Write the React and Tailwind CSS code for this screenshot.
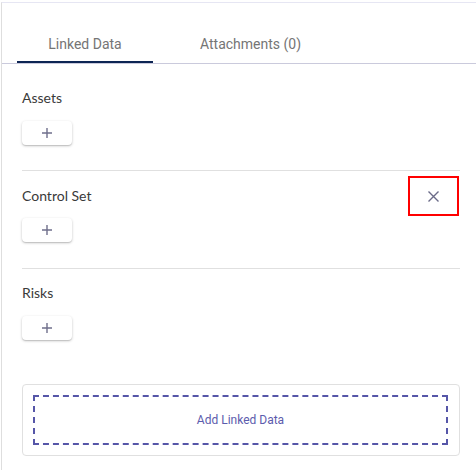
import { useState } from 'react'

function AddButton() {
  return (
    <button
      type="button"
      className="flex h-[24px] w-[50px] items-center justify-center rounded-[4px] bg-white shadow-[0_1px_3px_rgba(0,0,0,0.2),0_1px_1px_rgba(0,0,0,0.12)]"
    >
      <svg width="10" height="10" viewBox="0 0 10 10" className="text-[#6f6f8c]">
        <path d="M5 0v10M0 5h10" stroke="currentColor" strokeWidth="1.4" fill="none" />
      </svg>
    </button>
  )
}

function CloseButton() {
  return (
    <button
      type="button"
      className="-my-[10px] mr-[1px] flex h-[40px] w-[51px] items-center justify-center border-2 border-[#ff0000] bg-white"
    >
      <svg width="11" height="11" viewBox="0 0 11 11" className="text-[#6b6b88]">
        <path d="M0.5 0.5l10 10M10.5 0.5l-10 10" stroke="currentColor" strokeWidth="1.4" fill="none" />
      </svg>
    </button>
  )
}

const tabs = [
  { id: 'linked', label: 'Linked Data', width: 'w-[136px]' },
  { id: 'attachments', label: 'Attachments (0)', width: 'w-[195px]' },
]

export default function App() {
  const [activeTab, setActiveTab] = useState('linked')

  return (
    <div className="h-[470px] w-[476px] bg-white pl-[1px] pt-[2px]">
      <div className="h-full border-l border-t border-l-[#dedede] border-t-[#e6e6f3] font-['Roboto',sans-serif]">
        <div className="flex h-[61px] items-end border-b border-[#cacadc] pl-[15px]">
          {tabs.map((tab) => {
            const isActive = activeTab === tab.id
            return (
              <button
                key={tab.id}
                type="button"
                onClick={() => setActiveTab(tab.id)}
                className={[
                  'flex h-[36px] items-center justify-center border-b-2 text-[14px] text-[#757575]',
                  tab.width,
                  isActive ? 'border-[#0d2554]' : 'border-transparent',
                ].join(' ')}
              >
                {tab.label}
              </button>
            )
          })}
        </div>

        <div className="pl-[20px] pr-[16px] font-['Lato',sans-serif] text-[14px] leading-[20px] text-[#3a3a3a]">
          <section className="border-b border-[#e0e0e0] pb-[25px] pt-[24px]">
            <h3>Assets</h3>
            <div className="mt-[13px]">
              <AddButton />
            </div>
          </section>

          <section className="border-b border-[#e0e0e0] pb-[26px] pt-[15px]">
            <div className="flex h-[20px] items-center justify-between">
              <h3>Control Set</h3>
              <CloseButton />
            </div>
            <div className="mt-[12px]">
              <AddButton />
            </div>
          </section>

          <section className="pt-[14px]">
            <h3>Risks</h3>
            <div className="mt-[13px]">
              <AddButton />
            </div>
          </section>

          <div className="mt-[44px] rounded-[4px] border border-[#e0e0e0] py-[10px] pl-[10px] pr-[11px]">
            <button
              type="button"
              className="flex h-[50px] w-full items-center justify-center border-2 border-dashed border-[#5656a8] font-['Roboto',sans-serif] text-[12px] text-[#5c5cad]"
            >
              Add Linked Data
            </button>
          </div>
        </div>
      </div>
    </div>
  )
}
